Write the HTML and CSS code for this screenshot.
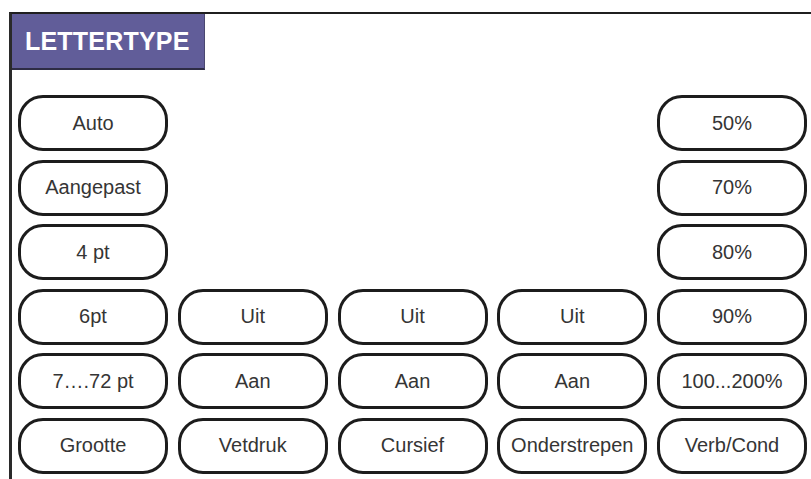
FILE: index.html
```html
<!DOCTYPE html>
<html lang="nl">
<head>
<meta charset="utf-8">
<title>Lettertype</title>
<link rel="stylesheet" href="styles.css">
</head>
<body>
<div class="screen">
  <div class="title">LETTERTYPE</div>
  <div class="grid">
    <div class="btn">Auto</div>
    <div class="btn last">50%</div>
    <div class="btn">Aangepast</div>
    <div class="btn last">70%</div>
    <div class="btn">4 pt</div>
    <div class="btn last">80%</div>
    <div class="btn">6pt</div>
    <div class="btn">Uit</div>
    <div class="btn">Uit</div>
    <div class="btn">Uit</div>
    <div class="btn">90%</div>
    <div class="btn">7….72 pt</div>
    <div class="btn">Aan</div>
    <div class="btn">Aan</div>
    <div class="btn">Aan</div>
    <div class="btn">100...200%</div>
    <div class="btn">Grootte</div>
    <div class="btn">Vetdruk</div>
    <div class="btn">Cursief</div>
    <div class="btn">Onderstrepen</div>
    <div class="btn">Verb/Cond</div>
  </div>
</div>
</body>
</html>
```

FILE: styles.css
```css
html, body {
  margin: 0;
  padding: 0;
  background: #ffffff;
  overflow: hidden;
}

body {
  width: 811px;
  height: 479px;
  font-family: "Liberation Sans", Arial, sans-serif;
}

.screen {
  margin: 12px 0 0 9px;
  height: 467px;
  border-top: 2px solid #1f1f1f;
  border-left: 3px solid #2a2a2a;
  box-sizing: border-box;
}

.title {
  width: 193px;
  height: 56px;
  box-sizing: border-box;
  background: #615d99;
  border-right: 1px solid #4a4770;
  border-bottom: 2px solid #2e2c45;
  color: #ffffff;
  font-weight: bold;
  font-size: 25px;
  line-height: 54px;
  padding-left: 13px;
  letter-spacing: 0.2px;
}

.grid {
  display: grid;
  grid-template-columns: repeat(5, 150px);
  grid-auto-rows: 56px;
  column-gap: 9.75px;
  row-gap: 8.6px;
  margin-top: 25px;
  padding-left: 6px;
}

.btn {
  box-sizing: border-box;
  border: 3px solid #1c1c1c;
  border-radius: 25px;
  display: flex;
  align-items: center;
  justify-content: center;
  font-size: 20px;
  color: #353535;
  white-space: nowrap;
}

.last {
  grid-column: 5;
}
```
